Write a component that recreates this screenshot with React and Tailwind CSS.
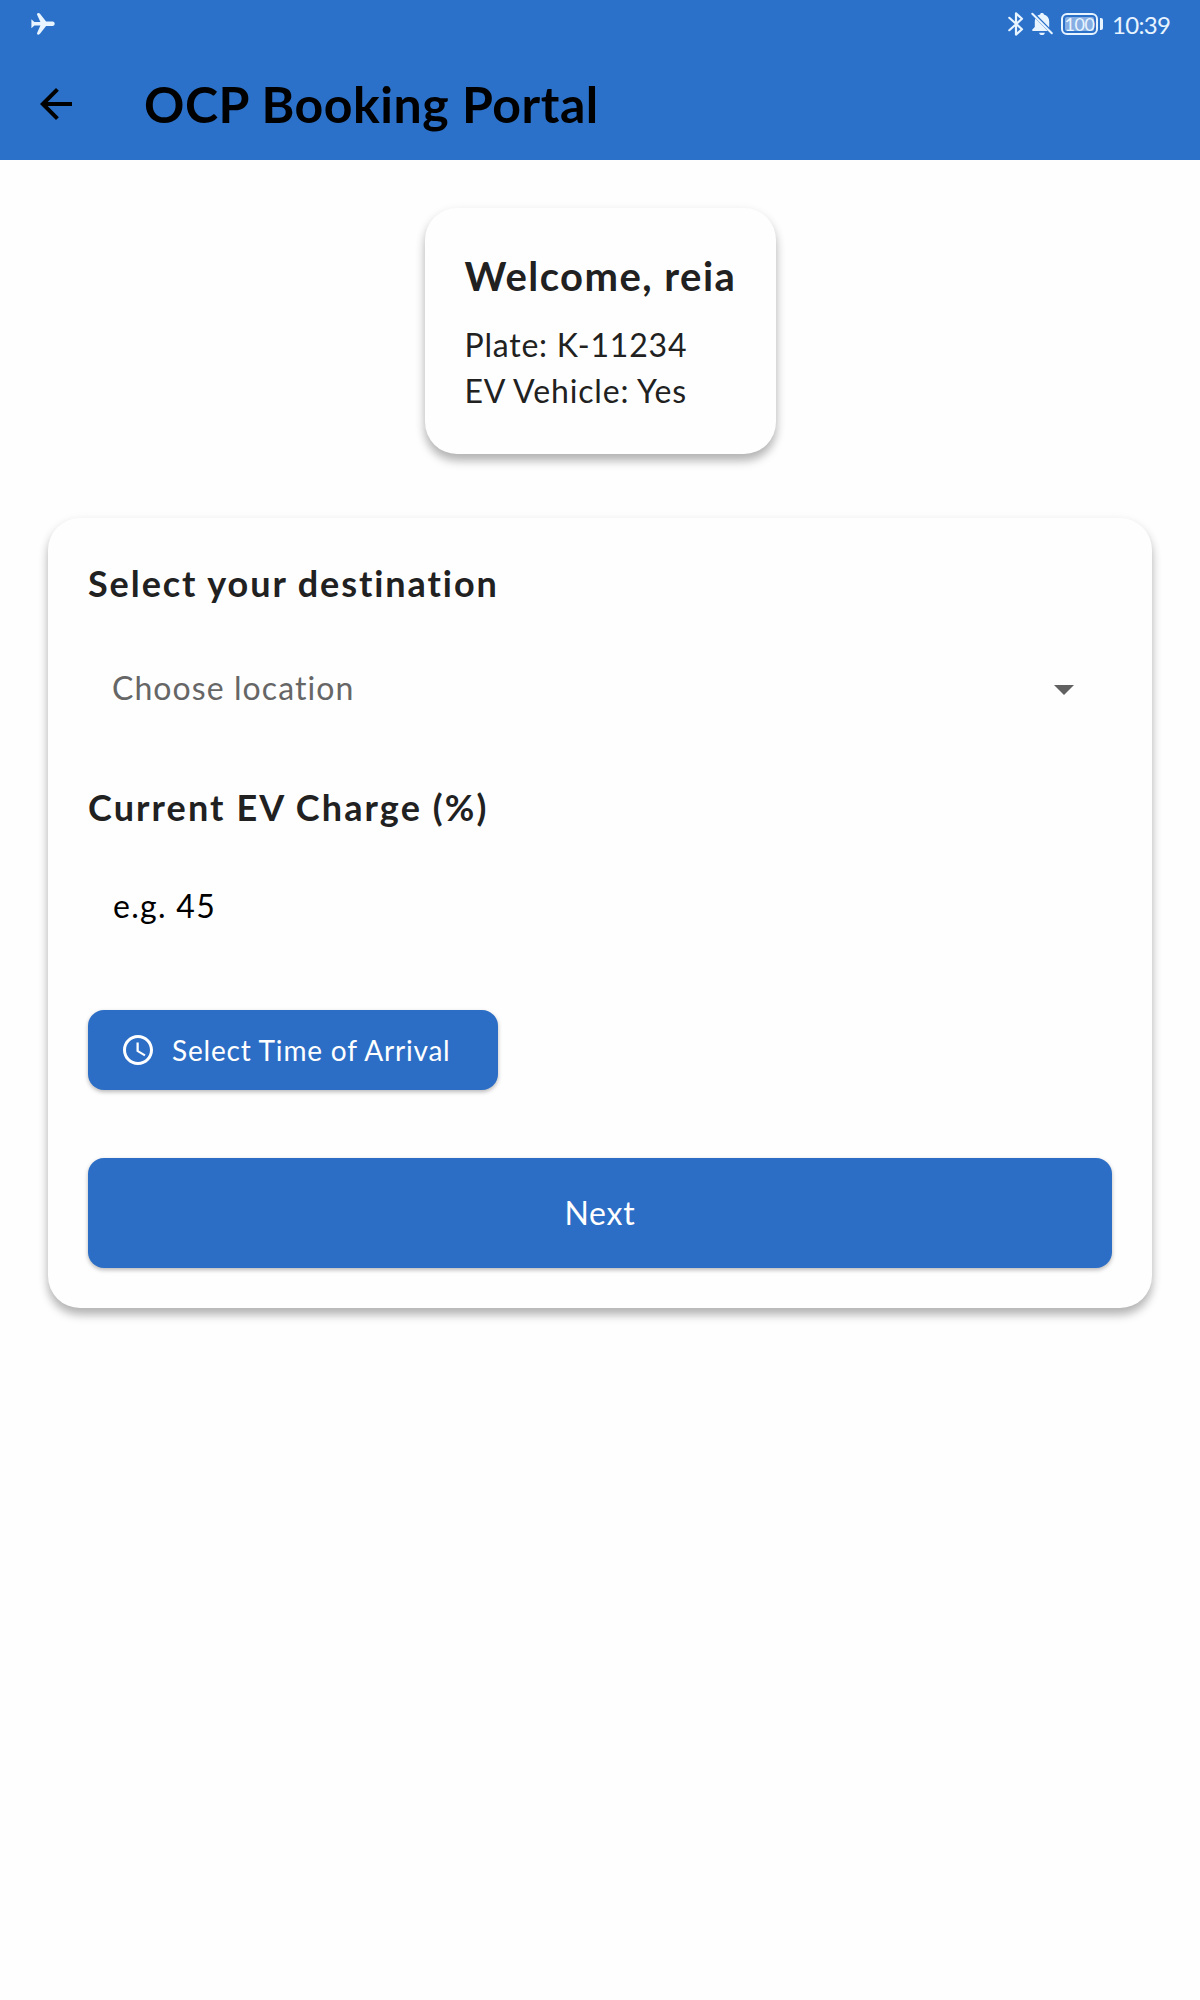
import { MdArrowBack, MdSchedule, MdArrowDropDown } from "react-icons/md";

function PlaneIcon() {
  return (
    <svg className="h-[24px] w-[24px]" viewBox="0 0 24 24" fill="#e8f4ff">
      <path d="M.4 7.3 3.4 10h6L6.2 3C5.700 1.800 6.300 1 7.400 1c.8 0 1.300.4 1.800 1.100l5.900 7.500h6.400c1.500 0 2.200 1 2.200 2.200s-.7 2.200-2.200 2.200h-6.400l-5.900 7.600c-.5.7-1 1.100-1.800 1.100-1.100 0-1.700-.8-1.200-2L9.400 13.600h-6L.4 16.300z" />
    </svg>
  );
}

function BluetoothIcon() {
  return (
    <svg className="h-[24px] w-[16px]" viewBox="0 0 16 24" fill="none" stroke="#e8f4ff" strokeWidth="2.200" strokeLinejoin="round" strokeLinecap="round">
      <path d="M1.300 5.800 14 17.200 8 22.600V1.400L14 6.800 1.300 18.200" />
    </svg>
  );
}

function BellOffIcon() {
  return (
    <svg className="h-[24px] w-[22px]" viewBox="0 0 22 24" fill="#e8f4ff">
      <path d="M6.400 3.600c.9-.6 1.800-1 2.700-1.200C9.300 1.500 10 1 11 1s1.700.5 1.900 1.400c3.400.8 5.300 3.400 5.300 6.800v6.300z" />
      <path d="M4.400 6.600 16.800 19H1.300v-1.500l2.500-2.500V9.500c0-1 .2-2 .6-2.900z" />
      <path d="M8.200 20.700h5.600c0 1.400-1.200 2.300-2.800 2.300s-2.800-.9-2.800-2.300z" />
      <path d="M1.300 1.800 20.800 21.200" stroke="#e8f4ff" strokeWidth="2" strokeLinecap="round" />
    </svg>
  );
}

function Battery() {
  return (
    <div className="flex items-center gap-[2px]">
      <div className="flex h-[22px] w-[37px] items-center justify-center rounded-[6px] border-2 border-[#e8f4ff] p-[2px]">
        <div className="flex h-full w-full items-center justify-center rounded-[2px] bg-[#86aee2] text-[18px] leading-none tracking-[-0.5px] text-[#e8f4ff]">
          100
        </div>
      </div>
      <div className="h-[12px] w-[3px] rounded-r-[2px] bg-[#e8f4ff]" />
    </div>
  );
}

function StatusBar() {
  return (
    <div className="flex h-12 items-center justify-between pl-[31px] pr-[28px] text-[#e8f4ff]">
      <PlaneIcon />
      <div className="flex items-center">
        <BluetoothIcon />
        <div className="ml-[7px]"><BellOffIcon /></div>
        <div className="ml-[8px]"><Battery /></div>
        <span className="ml-[9px] w-[60px] whitespace-nowrap pt-[1px] text-[24px] leading-[28px] tracking-[-0.7px]">10:39</span>
      </div>
    </div>
  );
}

function WelcomeCard() {
  return (
    <section className="h-[246px] w-[351px] rounded-[32px] bg-[#fefefe] pl-10 pt-11 shadow-[0_7px_10px_rgba(0,0,0,0.26),0_3px_12px_rgba(0,0,0,0.07)]">
      <h2 className="whitespace-nowrap text-[40px] font-bold leading-[48px] tracking-[1.45px]">Welcome, reia</h2>
      <div className="mt-[22px] whitespace-nowrap text-[32px] leading-[46px]">
        <p className="tracking-[0.78px]">Plate: K-11234</p>
        <p className="tracking-[0.85px]">EV Vehicle: Yes</p>
      </div>
    </section>
  );
}

function BookingForm() {
  return (
    <section className="mt-16 flex h-[790px] w-[1104px] flex-col rounded-[32px] bg-[#fefefe] p-10 shadow-[0_7px_10px_rgba(0,0,0,0.26),0_3px_12px_rgba(0,0,0,0.07)]">
      <h3 className="mt-[3px] text-[36px] font-bold leading-[44px] tracking-[1.93px]">Select your destination</h3>
      <button className="mt-[32px] flex h-[104px] items-center justify-between pl-6 pr-[24px] text-[#666666]">
        <span className="pb-0.5 text-[32px] leading-[40px] tracking-[1.07px]">Choose location</span>
        <MdArrowDropDown className="h-12 w-12 text-[#616161]" />
      </button>
      <h3 className="mt-[44px] text-[36px] font-bold leading-[44px] tracking-[2.1px]">Current EV Charge (%)</h3>
      <div className="mt-[29px] flex h-[96px] items-center pl-[25px] text-[32px] leading-[40px] tracking-[1.3px] text-black">e.g. 45</div>
      <button className="mt-[56px] flex h-20 w-[410px] items-center gap-4 rounded-[16px] bg-[#2c6ec6] pl-8 text-white shadow-[0_2px_4px_rgba(0,0,0,0.28)]">
        <MdSchedule className="h-9 w-9" />
        <span className="whitespace-nowrap text-[28px] leading-[34px] tracking-[0.8px]">Select Time of Arrival</span>
      </button>
      <button className="mt-[68px] flex h-[110px] items-center justify-center rounded-[16px] bg-[#2c6ec6] text-[32px] leading-[40px] tracking-[0.8px] text-white shadow-[0_2px_4px_rgba(0,0,0,0.28)]">
        Next
      </button>
    </section>
  );
}

export default function App() {
  return (
    <div className="flex min-h-[2000px] w-[1200px] flex-col bg-[#fefefe] font-['Lato',sans-serif] text-[#212121]">
      <header className="h-[160px] bg-[#2b71ca]">
        <StatusBar />
        <div className="flex h-28 items-center pl-8">
          <MdArrowBack className="h-12 w-12 text-black" />
          <h1 className="ml-16 whitespace-nowrap text-[50px] font-bold leading-[60px] tracking-[0.55px] text-black">OCP Booking Portal</h1>
        </div>
      </header>
      <main className="flex flex-col items-center pt-12">
        <WelcomeCard />
        <BookingForm />
      </main>
    </div>
  );
}
